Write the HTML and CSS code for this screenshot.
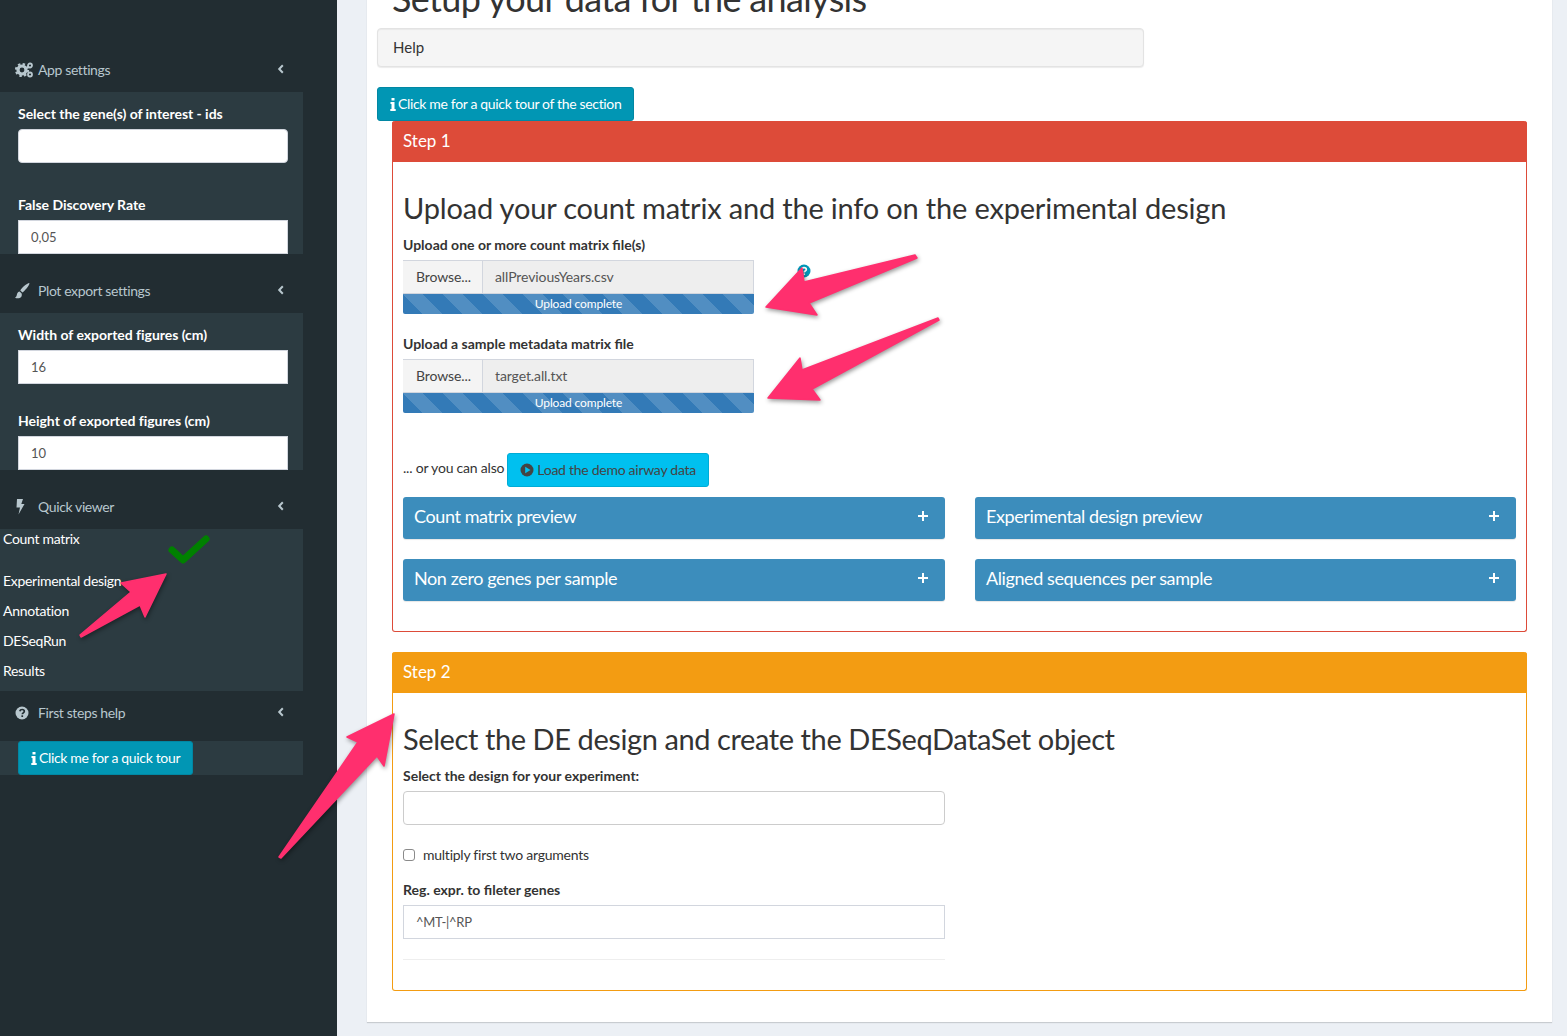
FILE: index.html
```html
<!DOCTYPE html>
<html lang="en">
<head>
<meta charset="utf-8">
<title>Setup your data for the analysis</title>
<link rel="stylesheet" href="styles.css">
</head>
<body>
<aside class="sidebar">
  <div class="menu-head first">
    <svg class="mi" viewBox="0 0 18 16" preserveAspectRatio="xMinYMid"><circle cx="7" cy="8" r="4" fill="none" stroke="#b8c7ce" stroke-width="3.2"/><circle cx="7" cy="8" r="6" fill="none" stroke="#b8c7ce" stroke-width="2.2" stroke-dasharray="2.4 2.3"/><circle cx="15" cy="3.500" r="2" fill="none" stroke="#b8c7ce" stroke-width="1.800"/><circle cx="15" cy="12.500" r="2" fill="none" stroke="#b8c7ce" stroke-width="1.800"/></svg>
    <span class="mt">App settings</span>
    <svg class="chev" viewBox="0 0 8 10"><path d="M5.8 1.2 2.2 5l3.6 3.8" fill="none" stroke="#b8c7ce" stroke-width="2"/></svg>
  </div>
  <div class="tree tree-a">
    <div class="fg sel"><label class="sl">Select the gene(s) of interest - ids</label><input class="si round" type="text"></div>
    <div class="fg"><label class="sl">False Discovery Rate</label><input class="si" type="text" value="0,05"></div>
  </div>
  <div class="menu-head">
    <svg class="mi" viewBox="0 0 18 16" preserveAspectRatio="xMinYMid"><path d="M14 0C11 1 7 4.500 5.300 7.500l2.200 2C10 7.500 13.500 3.500 14.500.5ZM4.500 8.500C2.500 9 2 10.500 1.800 12c-.3 1.500-1 2.300-1.800 2.700 2 1 5 .8 6.200-.8C7 12.800 7 11.300 6.500 10.200Z" fill="#b8c7ce"/></svg>
    <span class="mt">Plot export settings</span>
    <svg class="chev" viewBox="0 0 8 10"><path d="M5.800 1.200 2.200 5l3.600 3.800" fill="none" stroke="#b8c7ce" stroke-width="2"/></svg>
  </div>
  <div class="tree tree-b">
    <div class="fg"><label class="sl">Width of exported figures (cm)</label><input class="si" type="text" value="16"></div>
    <div class="fg"><label class="sl">Height of exported figures (cm)</label><input class="si" type="text" value="10"></div>
  </div>
  <div class="menu-head">
    <svg class="mi" viewBox="0 0 18 16" preserveAspectRatio="xMinYMid"><path d="M2 0h6L6.300 5H9.500L3.500 15.500 5 8.500H1.500Z" fill="#b8c7ce"/></svg>
    <span class="mt">Quick viewer</span>
    <svg class="chev" viewBox="0 0 8 10"><path d="M5.800 1.200 2.200 5l3.600 3.800" fill="none" stroke="#b8c7ce" stroke-width="2"/></svg>
  </div>
  <div class="tree tree-c">
    <div class="qi first-qi">Count matrix</div>
    <div class="qi">Experimental design</div>
    <div class="qi">Annotation</div>
    <div class="qi">DESeqRun</div>
    <div class="qi">Results</div>
  </div>
  <div class="menu-head short">
    <svg class="mi" viewBox="0 0 18 16" preserveAspectRatio="xMinYMid"><circle cx="7" cy="8" r="6.500" fill="#b8c7ce"/><path d="M4.800 6.300c.3-1.300 1.200-1.800 2.300-1.800 1.300 0 2.200.8 2.200 1.800 0 1.500-2 1.600-2 3" fill="none" stroke="#222d32" stroke-width="1.700"/><rect x="6.400" y="10.300" width="1.700" height="1.700" fill="#222d32"/></svg>
    <span class="mt">First steps help</span>
    <svg class="chev" viewBox="0 0 8 10"><path d="M5.800 1.200 2.200 5l3.600 3.800" fill="none" stroke="#b8c7ce" stroke-width="2"/></svg>
  </div>
  <div class="tree tree-d">
    <button class="tour tour-side"><svg class="ii" viewBox="0 0 6 13"><path d="M1.500 0h3v2.600h-3ZM.5 4h4v7h1.200v2H.300v-2h1.200V6H.5Z" fill="#fff"/></svg><span>Click me for a quick tour</span></button>
  </div>
</aside>

<main class="main">
  <div class="panel">
    <h1 class="title">Setup your data for the analysis</h1>
    <div class="help">Help</div>
    <button class="tour tour-main"><svg class="ii" viewBox="0 0 6 13"><path d="M1.500 0h3v2.600h-3ZM.5 4h4v7h1.200v2H.300v-2h1.200V6H.5Z" fill="#fff"/></svg><span>Click me for a quick tour of the section</span></button>

    <section class="box box-red">
      <div class="box-head">Step 1</div>
      <div class="box-body">
        <h3 class="h3 h3-a">Upload your count matrix and the info on the experimental design</h3>
        <label class="ml first-ml">Upload one or more count matrix file(s)</label>
        <div class="file-row">
          <div class="file">
            <div class="file-line"><span class="browse">Browse...</span><span class="fname">allPreviousYears.csv</span></div>
            <div class="prog">Upload complete</div>
          </div>
          <svg class="qhelp" viewBox="0 0 14 14"><circle cx="7" cy="7" r="6.500" fill="#0097b8"/><path d="M4.700 5.400C5 4.100 5.900 3.600 7 3.600c1.300 0 2.300.8 2.300 1.800 0 1.500-2.100 1.600-2.100 3" fill="none" stroke="#fff" stroke-width="1.700"/><rect x="6.300" y="9.400" width="1.800" height="1.700" fill="#fff"/></svg>
        </div>
        <label class="ml second-ml">Upload a sample metadata matrix file</label>
        <div class="file">
          <div class="file-line"><span class="browse">Browse...</span><span class="fname">target.all.txt</span></div>
          <div class="prog">Upload complete</div>
        </div>
        <div class="demo-row">
          <span class="demo-text">... or you can also</span>
          <button class="demo"><svg class="pi" viewBox="0 0 14 14"><circle cx="7" cy="7" r="6.500" fill="#444"/><path d="M5.200 3.800v6.400L10.500 7Z" fill="#00c0ef"/></svg><span>Load the demo airway data</span></button>
        </div>
        <div class="cols">
          <div class="cbox"><span>Count matrix preview</span><svg class="plus" viewBox="0 0 10 10"><path d="M5 0v10M0 5h10" stroke="#fff" stroke-width="2"/></svg></div>
          <div class="cbox"><span>Experimental design preview</span><svg class="plus" viewBox="0 0 10 10"><path d="M5 0v10M0 5h10" stroke="#fff" stroke-width="2"/></svg></div>
          <div class="cbox"><span>Non zero genes per sample</span><svg class="plus" viewBox="0 0 10 10"><path d="M5 0v10M0 5h10" stroke="#fff" stroke-width="2"/></svg></div>
          <div class="cbox"><span>Aligned sequences per sample</span><svg class="plus" viewBox="0 0 10 10"><path d="M5 0v10M0 5h10" stroke="#fff" stroke-width="2"/></svg></div>
        </div>
      </div>
    </section>

    <section class="box box-orange">
      <div class="box-head">Step 2</div>
      <div class="box-body">
        <h3 class="h3 h3-b">Select the DE design and create the DESeqDataSet object</h3>
        <label class="ml first-ml">Select the design for your experiment:</label>
        <input class="mi-input round" type="text">
        <label class="check"><input class="cb" type="checkbox"><span>multiply first two arguments</span></label>
        <label class="ml reg-ml">Reg. expr. to fileter genes</label>
        <input class="mi-input" type="text" value="^MT-|^RP">
        <hr class="rule">
      </div>
    </section>
  </div>
</main>

<svg class="overlay" viewBox="0 0 1567 1036" aria-hidden="true">
  <path class="check-mark" d="M172 550 183 560 206 539"/>
  <g class="arrows">
    <polygon points="81,637 140,605 145,617 166,574 121,583 131,592 80,635"/>
    <polygon points="915,255 917,258 809,303 817,315 766,307 802,268 804,282"/>
    <polygon points="938,318 939,320 812,389 820,400 768,398 800,358 802,370"/>
    <polygon points="279,857 281,858 377,756 384,766 394,714 347,737 358,742"/>
  </g>
</svg>
</body>
</html>
```

FILE: styles.css
```css
* { box-sizing: border-box; }
html, body { margin: 0; height: 1036px; overflow: hidden; }
body {
  display: flex;
  position: relative;
  background: #ecf0f5;
  font-family: Lato, "Noto Sans", sans-serif;
  font-size: 14px;
  line-height: 20px;
  color: #333;
}

/* sidebar */
.sidebar {
  width: 337px;
  flex: none;
  height: 1036px;
  padding: 48px 34px 0 0;
  background: #222d32;
}
.menu-head {
  display: flex;
  align-items: flex-end;
  height: 59px;
  padding: 0 0 12px 15px;
  color: #b8c7ce;
}
.menu-head.first { height: 44px; }
.menu-head.short { height: 50px; padding-bottom: 18px; }
.mi { width: 18px; height: 16px; flex: none; margin-bottom: 2px; }
.mt { margin-left: 5px; letter-spacing: -.38px; }
.chev { width: 8px; height: 10px; margin-left: auto; margin-right: 18px; margin-bottom: 6px; }
.tree { background: #2c3b41; overflow: hidden; }
.tree-a { height: 162px; padding: 12px 15px 0 18px; }
.tree-b { height: 157px; padding: 12px 15px 0 18px; }
.tree-c { height: 162px; padding: 0 0 0 3px; display: flex; flex-direction: column; gap: 10px; }
.tree-d { height: 34px; padding-left: 18px; }
.fg { margin-bottom: 27px; }
.fg.sel { margin-bottom: 32px; }
.sl {
  display: block;
  margin-bottom: 5px;
  color: #fff;
  font-weight: 700;
  letter-spacing: -.03px;
}
.si {
  display: block;
  width: 270px;
  height: 34px;
  padding: 5px 12px;
  border: 1px solid #d2d6de;
  background: #fff;
  color: #555;
  font: 13px/20px Lato, "Noto Sans", sans-serif;
  outline: none;
}
.round { border-radius: 4px; }
.qi { color: #fff; height: 20px; letter-spacing: -.3px; }
.first-qi { margin-bottom: 12px; }

.tour {
  display: inline-flex;
  align-items: center;
  height: 34px;
  padding: 0 12px;
  background: #0196b4;
  border: 1px solid #0187a3;
  border-radius: 3px;
  color: #fff;
  font: 14px/20px Lato, "Noto Sans", sans-serif;
  letter-spacing: -.34px;
}
.ii { width: 6px; height: 13px; margin-right: 2px; flex: none; }

/* main */
.main { flex: 1; min-width: 0; margin-top: -22px; padding: 0 15px 0 30px; height: 1058px; }
.panel {
  height: 1044px;
  padding: 0 10px;
  background: #fff;
  box-shadow: 0 1px 1px rgba(0,0,0,.15);
}
.title {
  margin: 0 0 0 15px;
  height: 50px;
  font-size: 36px;
  line-height: 40px;
  font-weight: 400;
  color: #333;
  white-space: nowrap;
  letter-spacing: -.65px;
}
.help {
  width: 767px;
  height: 39px;
  padding: 8px 15px;
  background: #f5f5f5;
  border: 1px solid #e3e3e3;
  border-radius: 4px;
  box-shadow: inset 0 1px 1px rgba(0,0,0,.05), 0 1px 1px rgba(0,0,0,.08);
  font-size: 15px;
}
.tour-main { display: flex; margin-top: 20px; }

.box {
  width: 1135px;
  margin-left: 15px;
  background: #fff;
  border: 1px solid;
  border-top: 0;
  border-radius: 3px;
}
.box-red { height: 511px; border-color: #dd4b39; }
.box-orange { height: 339px; margin-top: 20px; border-color: #f39c12; }
.box-head {
  height: 41px;
  margin: 0 -1px;
  padding: 9px 11px;
  color: #fff;
  font-size: 17px;
  line-height: 21px;
  border-radius: 3px 3px 0 0;
}
.box-red .box-head { background: #dd4b39; }
.box-orange .box-head { background: #f39c12; }
.box-body { padding: 29px 10px 0; }
.h3 {
  margin: 0;
  height: 35px;
  font-size: 29px;
  line-height: 34px;
  font-weight: 400;
  color: #333;
  white-space: nowrap;
}
.h3-a { letter-spacing: -.18px; }
.h3-b { letter-spacing: -.41px; }
.ml { display: block; font-weight: 700; color: #333; }
.first-ml { margin: 9px 0 5px; }
.second-ml { margin: 20px 0 5px; }
.reg-ml { margin: 15px 0 5px; }

.file-row { display: flex; height: 54px; }
.file { width: 351px; height: 54px; flex: none; }
.file-line {
  display: flex;
  height: 34px;
  border: 1px solid #d2d6de;
  background: #eee;
  color: #555;
  letter-spacing: -.1px;
}
.browse {
  width: 80px;
  padding: 6px 13px;
  background: #f4f4f4;
  border-right: 1px solid #d2d6de;
  color: #444;
  margin-left: -1px;
  flex: none;
}
.fname { padding: 6px 12px; }
.prog {
  height: 20px;
  background-color: #337ab7;
  background-image: linear-gradient(45deg, rgba(255,255,255,.15) 25%, transparent 25%, transparent 50%, rgba(255,255,255,.15) 50%, rgba(255,255,255,.15) 75%, transparent 75%, transparent);
  background-size: 40px 40px;
  color: #fff;
  font-size: 12px;
  text-align: center;
  border-radius: 0 0 2px 2px;
  letter-spacing: -.15px;
}
.qhelp { width: 14px; height: 14px; margin: 4px 0 0 43px; flex: none; }

.demo-row { display: flex; align-items: center; margin-top: 40px; height: 34px; }
.demo-text { margin-top: -4px; margin-right: 3px; letter-spacing: -.2px; }
.demo {
  display: inline-flex;
  align-items: center;
  height: 34px;
  padding: 0 12px;
  background: #00c0ef;
  border: 1px solid #00acd6;
  border-radius: 3px;
  color: #444;
  font: 14px/20px Lato, "Noto Sans", sans-serif;
  letter-spacing: -.27px;
}
.pi { width: 14px; height: 14px; margin-right: 3px; flex: none; }

.cols {
  display: grid;
  grid-template-columns: 542px 541px;
  column-gap: 30px;
  row-gap: 20px;
  margin-top: 10px;
}
.cbox {
  display: flex;
  align-items: center;
  justify-content: space-between;
  height: 42px;
  padding: 0 17px 4px 11px;
  background: #3c8dbc;
  border-radius: 3px;
  color: #fff;
  font-size: 18px;
  box-shadow: 0 1px 1px rgba(0,0,0,.1);
  letter-spacing: -.4px;
}
.plus { width: 10px; height: 10px; }

.mi-input {
  display: block;
  width: 542px;
  height: 34px;
  padding: 6px 12px;
  border: 1px solid #d2d6de;
  background: #fff;
  color: #555;
  font: 13px/20px Lato, "Noto Sans", sans-serif;
  letter-spacing: -.3px;
  outline: none;
}
.mi-input.round { border-color: #ccc; }
.check { display: flex; align-items: center; height: 20px; margin-top: 20px; letter-spacing: -.25px; }
.cb {
  appearance: none;
  width: 12px;
  height: 12px;
  margin: 0 8px 0 0;
  border: 1px solid #8a8a8a;
  border-radius: 3px;
  background: #fff;
}
.rule { width: 542px; margin: 20px 0 0; border: 0; border-top: 1px solid #eee; }

.overlay {
  position: absolute;
  left: 0;
  top: 0;
  width: 1567px;
  height: 1036px;
  pointer-events: none;
}
.arrows { fill: #ff2f6e; stroke: #ff2f6e; stroke-width: 1.5; stroke-linejoin: round; filter: drop-shadow(1px 2px 2px rgba(0,0,0,.4)); }
.check-mark { fill: none; stroke: #008000; stroke-width: 7; stroke-linecap: round; stroke-linejoin: round; }
```
